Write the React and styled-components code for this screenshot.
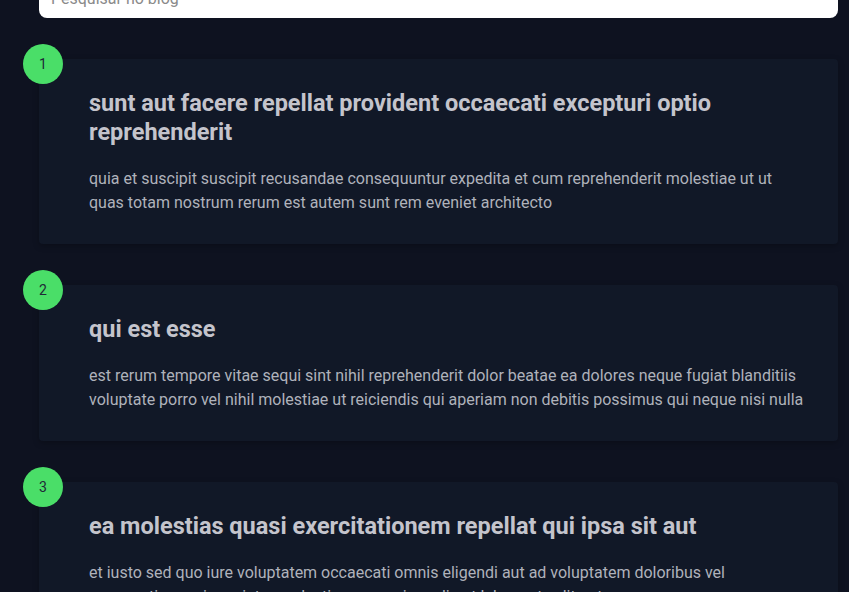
import React from "react";
import styled, { createGlobalStyle } from "styled-components";

const posts = [
  {
    id: 1,
    title: "sunt aut facere repellat provident occaecati excepturi optio reprehenderit",
    body: "quia et suscipit suscipit recusandae consequuntur expedita et cum reprehenderit molestiae ut ut quas totam nostrum rerum est autem sunt rem eveniet architecto",
  },
  {
    id: 2,
    title: "qui est esse",
    body: "est rerum tempore vitae sequi sint nihil reprehenderit dolor beatae ea dolores neque fugiat blanditiis voluptate porro vel nihil molestiae ut reiciendis qui aperiam non debitis possimus qui neque nisi nulla",
  },
  {
    id: 3,
    title: "ea molestias quasi exercitationem repellat qui ipsa sit aut",
    body: "et iusto sed quo iure voluptatem occaecati omnis eligendi aut ad voluptatem doloribus vel accusantium quis pariatur molestiae porro eius odio et labore et velit aut",
  },
];

export default function App() {
  return (
    <>
      <GlobalStyle />
      <Page>
        <Search placeholder="Pesquisar no blog" />
        <PostList>
          {posts.map((post) => (
            <PostCard key={post.id}>
              <Badge>{post.id}</Badge>
              <PostTitle>{post.title}</PostTitle>
              <PostBody>{post.body}</PostBody>
            </PostCard>
          ))}
        </PostList>
      </Page>
    </>
  );
}

const GlobalStyle = createGlobalStyle`
  * { box-sizing: border-box; }
  body {
    margin: 0;
    background: #0e1220;
    font-family: Roboto, "Liberation Sans", sans-serif;
    overflow: hidden;
  }
`;

// page
const Page = styled.main`
  margin-top: -22px;
  padding: 0 11px 40px 39px;
  display: flex;
  flex-direction: column;
  gap: 41px;
`;

const Search = styled.input`
  width: 100%;
  height: 40px;
  border: none;
  border-radius: 8px;
  background: #ffffff;
  padding: 0 12px;
  font-family: Roboto, "Liberation Sans", sans-serif;
  font-size: 16px;
  color: #333;
  outline: none;
  &::placeholder {
    color: #8a8a8a;
  }
`;

// posts
const PostList = styled.div`
  display: flex;
  flex-direction: column;
  gap: 41px;
`;

const PostCard = styled.article`
  position: relative;
  background: #111827;
  border-radius: 4px;
  padding: 30px 30px 29px 50px;
  box-shadow: 0 2px 6px rgba(0, 0, 0, 0.25);
`;

const Badge = styled.span`
  position: absolute;
  top: -15px;
  left: -16px;
  width: 40px;
  height: 40px;
  border-radius: 50%;
  background: #4ade68;
  color: #1f2937;
  font-size: 14px;
  display: flex;
  align-items: center;
  justify-content: center;
`;

const PostTitle = styled.h2`
  margin: 0 0 20px;
  font-size: 23.5px;
  font-weight: 700;
  line-height: 29px;
  color: #c4c4cc;
`;

const PostBody = styled.p`
  margin: 0;
  font-size: 16px;
  line-height: 24px;
  color: #afb2bb;
`;
